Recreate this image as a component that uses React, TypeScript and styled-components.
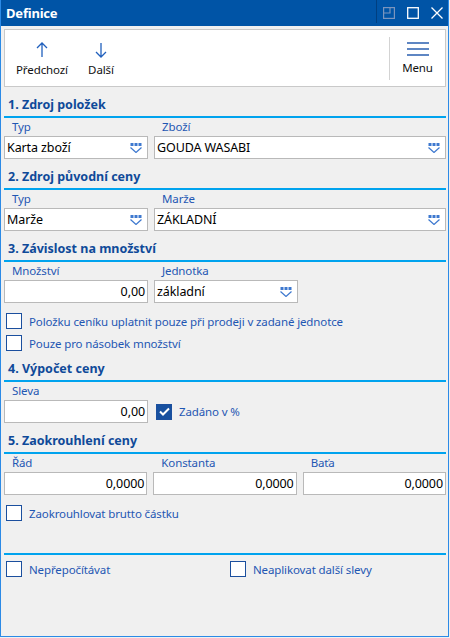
import React from 'react';
import styled, { createGlobalStyle } from 'styled-components';

const FONT = '"Noto Sans", "Liberation Sans", sans-serif';
const LINE_BLUE = '#00a3ee';
const TEXT_BLUE = '#1f57b3';
const HEAD_BLUE = '#0f4a99';

const GlobalStyle = createGlobalStyle`
  html, body {
    margin: 0;
    padding: 0;
    background: #f0f0f0;
  }
  body {
    font-family: ${FONT};
  }
`;

const Window = styled.div`
  width: 449px;
  height: 637px;
  box-sizing: border-box;
  border: 1px solid #2b8ae6;
  border-top: none;
  background: #f0f0f0;
  display: flex;
  flex-direction: column;
`;

const TitleBar = styled.div`
  height: 26px;
  flex: none;
  background: #0054a6;
  display: flex;
  align-items: center;
  padding-left: 5px;
`;

const Title = styled.span`
  color: #fff;
  font-weight: 700;
  font-size: 13px;
  letter-spacing: -0.2px;
`;

const Controls = styled.div`
  margin-left: auto;
  height: 100%;
  display: flex;
  align-items: center;
  gap: 12px;
  padding-right: 5px;
`;

const ControlSep = styled.div`
  width: 1px;
  height: 23px;
  align-self: flex-start;
  background: #003f80;
  margin-right: -6px;
`;

const Toolbar = styled.div`
  margin: 3px 2px 0 3px;
  height: 58px;
  flex: none;
  box-sizing: border-box;
  background: #fff;
  border: 1px solid #c9c9c9;
  display: flex;
  padding-left: 8px;
`;

const ToolButton = styled.div<{ $width: number }>`
  width: ${(p) => p.$width}px;
  display: flex;
  flex-direction: column;
  align-items: center;
  padding-top: 12px;
  gap: 4px;
  font-size: 11.5px;
  letter-spacing: -0.1px;
  line-height: 16px;
  color: #111;
`;

const MenuArea = styled.div`
  margin-left: auto;
  display: flex;
`;

const ToolSep = styled.div`
  width: 1px;
  background: #d3d3d3;
  margin: 7px 0 6px;
`;

const Content = styled.div`
  padding: 0 2px 0 3px;
  display: flex;
  flex-direction: column;
  flex: 1;
`;

const SectionTitle = styled.div`
  padding: 9px 0 2px 4px;
  line-height: 18px;
  font-size: 12.5px;
  font-weight: 700;
  color: ${HEAD_BLUE};
  border-bottom: 2px solid ${LINE_BLUE};
`;

const FieldGrid = styled.div<{ $cols: string }>`
  display: grid;
  grid-template-columns: ${(p) => p.$cols};
  column-gap: 6px;
`;

const Field = styled.div`
  display: flex;
  flex-direction: column;
`;

const Label = styled.div`
  height: 18px;
  line-height: 18px;
  padding-left: 8px;
  font-size: 11.5px;
  letter-spacing: -0.12px;
  color: ${TEXT_BLUE};
`;

const Input = styled.div<{ $numeric?: boolean }>`
  height: 23px;
  box-sizing: border-box;
  border: 1px solid #b9b9b9;
  background: #fff;
  display: flex;
  align-items: center;
  justify-content: ${(p) => (p.$numeric ? 'flex-end' : 'space-between')};
  padding: 0 2px 0 2px;
  font-size: 12.5px;
  letter-spacing: -0.1px;
  color: #000;
  white-space: nowrap;
`;

const ComboIcon = styled.svg`
  flex: none;
  margin-right: 3px;
`;

const CheckList = styled.div`
  padding-top: 10px;
  display: flex;
  flex-direction: column;
  gap: 6px;
`;

const CheckRow = styled.label`
  display: flex;
  align-items: center;
  gap: 7px;
  height: 16px;
  padding-left: 2px;
  font-size: 11.5px;
  letter-spacing: -0.12px;
  color: ${TEXT_BLUE};
  white-space: nowrap;
`;

const Box = styled.span<{ $checked?: boolean }>`
  width: 16px;
  height: 16px;
  box-sizing: border-box;
  flex: none;
  border: 1.5px solid #1b4f9e;
  background: ${(p) => (p.$checked ? '#17509f' : '#fff')};
  display: flex;
  align-items: center;
  justify-content: center;
`;

const InlineCheck = styled.div`
  align-self: end;
  height: 23px;
  display: flex;
  align-items: center;
`;

const Footer = styled.div`
  margin-top: 32px;
  border-top: 2px solid ${LINE_BLUE};
  padding-top: 6px;
  display: grid;
  grid-template-columns: 224px 1fr;
`;

const ArrowIcon = ({ down }: { down?: boolean }) => (
  <svg width="12" height="16" viewBox="0 0 12 16" fill="none" stroke="#2160bd" strokeWidth="1.3">
    {down ? <path d="M6 1v14M1 10l5 5 5-5" /> : <path d="M6 15V1M1 6l5-5 5 5" />}
  </svg>
);

const MenuIcon = () => (
  <svg width="22" height="14" viewBox="0 0 22 14" fill="none" stroke="#2a5fb0" strokeWidth="1.4">
    <path d="M0 1h22M0 7h22M0 13h22" />
  </svg>
);

const DropIcon = () => (
  <ComboIcon width="12" height="10" viewBox="0 0 12 10">
    <rect x="0.5" y="0" width="3" height="3" fill="#3d78cf" />
    <rect x="4.5" y="0" width="3" height="3" fill="#3d78cf" />
    <rect x="8.5" y="0" width="3" height="3" fill="#3d78cf" />
    <path d="M0.5 4.5l5.5 5 5.5-5" fill="none" stroke="#3d78cf" strokeWidth="1.2" />
  </ComboIcon>
);

const Check = ({ checked, children }: { checked?: boolean; children?: React.ReactNode }) => (
  <CheckRow>
    <Box $checked={checked}>
      {checked && (
        <svg width="11" height="9" viewBox="0 0 11 9" fill="none" stroke="#fff" strokeWidth="2">
          <path d="M1 4.5l3 3 6-6" />
        </svg>
      )}
    </Box>
    {children}
  </CheckRow>
);

const Combo = ({ value }: { value: string }) => (
  <Input>
    <span>{value}</span>
    <DropIcon />
  </Input>
);

export default function App() {
  return (
    <Window>
      <GlobalStyle />
      <TitleBar>
        <Title>Definice</Title>
        <Controls>
          <ControlSep />
          <svg width="12" height="12" viewBox="0 0 12 12" fill="none" stroke="#7b95bd" strokeWidth="1.2">
            <rect x="0.6" y="0.6" width="10.8" height="10.8" />
            <path d="M7 0.6V6H0.6" />
          </svg>
          <svg width="12" height="12" viewBox="0 0 12 12" fill="none" stroke="#fff" strokeWidth="1.3">
            <rect x="0.7" y="0.7" width="10.6" height="10.6" />
          </svg>
          <svg width="12" height="12" viewBox="0 0 12 12" fill="none" stroke="#fff" strokeWidth="1.3">
            <path d="M0.5 0.5l11 11M11.5 0.5l-11 11" />
          </svg>
        </Controls>
      </TitleBar>

      <Toolbar>
        <ToolButton $width={58}>
          <ArrowIcon />
          Předchozí
        </ToolButton>
        <ToolButton $width={60}>
          <ArrowIcon down />
          Další
        </ToolButton>
        <MenuArea>
          <ToolSep />
          <ToolButton $width={55}>
            <MenuIcon />
            Menu
          </ToolButton>
        </MenuArea>
      </Toolbar>

      <Content>
        <SectionTitle>1. Zdroj položek</SectionTitle>
        <FieldGrid $cols="144px 1fr">
          <Field>
            <Label>Typ</Label>
            <Combo value="Karta zboží" />
          </Field>
          <Field>
            <Label>Zboží</Label>
            <Combo value="GOUDA WASABI" />
          </Field>
        </FieldGrid>

        <SectionTitle>2. Zdroj původní ceny</SectionTitle>
        <FieldGrid $cols="144px 1fr">
          <Field>
            <Label>Typ</Label>
            <Combo value="Marže" />
          </Field>
          <Field>
            <Label>Marže</Label>
            <Combo value="ZÁKLADNÍ" />
          </Field>
        </FieldGrid>

        <SectionTitle>3. Závislost na množství</SectionTitle>
        <FieldGrid $cols="144px 144px">
          <Field>
            <Label>Množství</Label>
            <Input $numeric>0,00</Input>
          </Field>
          <Field>
            <Label>Jednotka</Label>
            <Combo value="základní" />
          </Field>
        </FieldGrid>
        <CheckList>
          <Check>Položku ceníku uplatnit pouze při prodeji v zadané jednotce</Check>
          <Check>Pouze pro násobek množství</Check>
        </CheckList>

        <SectionTitle>4. Výpočet ceny</SectionTitle>
        <FieldGrid $cols="144px auto">
          <Field>
            <Label>Sleva</Label>
            <Input $numeric>0,00</Input>
          </Field>
          <InlineCheck>
            <Check checked>Zadáno v %</Check>
          </InlineCheck>
        </FieldGrid>

        <SectionTitle>5. Zaokrouhlení ceny</SectionTitle>
        <FieldGrid $cols="1fr 1fr 1fr">
          <Field>
            <Label>Řád</Label>
            <Input $numeric>0,0000</Input>
          </Field>
          <Field>
            <Label>Konstanta</Label>
            <Input $numeric>0,0000</Input>
          </Field>
          <Field>
            <Label>Baťa</Label>
            <Input $numeric>0,0000</Input>
          </Field>
        </FieldGrid>
        <CheckList>
          <Check>Zaokrouhlovat brutto částku</Check>
        </CheckList>

        <Footer>
          <Check>Nepřepočítávat</Check>
          <Check>Neaplikovat další slevy</Check>
        </Footer>
      </Content>
    </Window>
  );
}
